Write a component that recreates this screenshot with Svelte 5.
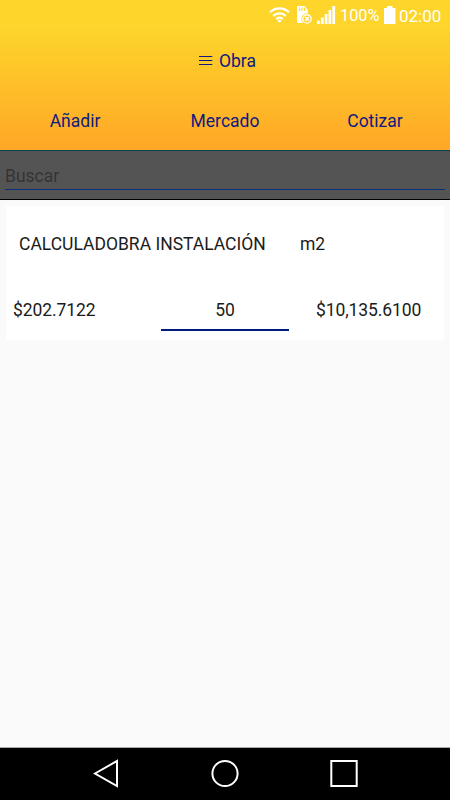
<script lang="ts">
  const tabs = ['Añadir', 'Mercado', 'Cotizar'];
  let search = '';
  let item = {
    name: 'CALCULADOBRA INSTALACIÓN',
    unit: 'm2',
    price: 202.7122,
    quantity: '50',
  };

  function money(value: number): string {
    return '$' + value.toLocaleString('en-US', {minimumFractionDigits: 4, maximumFractionDigits: 4});
  }

  $: total = item.price * Number(item.quantity);
</script>

<div class="screen">
  <header>
    <div class="status">
      <svg class="wifi" width="21" height="17" viewBox="0 0 21 17">
        <g fill="none" stroke="#fff" stroke-width="2.300">
          <path d="M1 6.300C6.400 1 14.600 1 20 6.300" />
          <path d="M4.200 9.900c3.600-3.500 9-3.500 12.600 0" />
          <path d="M7.300 13.100c1.900-1.700 4.500-1.700 6.400 0" />
        </g>
        <circle cx="10.500" cy="15" r="1.600" fill="#fff" />
      </svg>
      <svg class="card-icon" width="16" height="19" viewBox="0 0 16 19">
        <path d="M0 17V2Q0 1 1 1H7.500L10.800 4.500V18H1Q0 18 0 17z" fill="#fff" />
        <path d="M2.500 2.500v3.500M5 2.500v3.500M7.500 2.500v3.500" stroke="#ffd42b" stroke-width="1.100" />
        <circle cx="10" cy="13.900" r="5.600" fill="#ffd32b" />
        <circle cx="10" cy="13.900" r="4.200" fill="none" stroke="#fff" stroke-width="1.400" />
        <path d="M8.200 12.100l3.600 3.600M11.800 12.100l-3.600 3.600" stroke="#fff" stroke-width="1.600" />
      </svg>
      <svg class="signal" width="19" height="18" viewBox="0 0 19 18">
        <path d="M0 14.500h2.800v3.500H0zM3.900 11.500h2.800v6.500H3.900zM7.700 8h2.800v10H7.700zM11.500 4h2.800v14h-2.800zM15.300 0h2.800v18h-2.800z" fill="#fff" />
      </svg>
      <span class="percent">100%</span>
      <svg class="battery" width="12" height="18" viewBox="0 0 12 18">
        <path d="M3 0h5.500v2h3v16H0V2h3z" fill="#fff" />
      </svg>
      <span class="clock">02:00</span>
    </div>
    <div class="title">
      <svg width="14" height="10" viewBox="0 0 14 10">
        <path d="M0 .5h13.300M0 4.500h13.300M0 8.500h13.300" stroke="#101a80" stroke-width="1" />
      </svg>
      <span>Obra</span>
    </div>
    <nav>
      {#each tabs as tab}
        <button>{tab}</button>
      {/each}
    </nav>
  </header>

  <div class="search">
    <input type="text" bind:value={search} placeholder="Buscar">
  </div>

  <main>
    <div class="item">
      <div class="row top">
        <span class="name">{item.name}</span>
        <span class="unit">{item.unit}</span>
      </div>
      <div class="row bottom">
        <span class="price">{money(item.price)}</span>
        <input type="text" bind:value={item.quantity}>
        <span class="total">{money(total)}</span>
      </div>
    </div>
  </main>

  <footer>
    <svg width="28" height="30" viewBox="0 0 28 30">
      <path d="M3 15.500L25 3v25z" />
    </svg>
    <svg width="28" height="30" viewBox="0 0 28 30">
      <circle cx="14" cy="15.500" r="12.600" />
    </svg>
    <svg width="28" height="30" viewBox="0 0 28 30">
      <path d="M1.300 3h25.400v25H1.300z" />
    </svg>
  </footer>
</div>

<style>
  * {
    box-sizing: border-box;
    margin: 0;
    padding: 0;
  }

  .screen {
    display: flex;
    flex-direction: column;
    width: 450px;
    height: 800px;
    font-family: Roboto, sans-serif;
    font-size: 17.5px;
    color: #1b1b1b;
    background: #fafafa;
    overflow: hidden;
  }

  header {
    height: 150px;
    background: linear-gradient(#fdd52b 0, #fdd52b 28px, #ffa726 150px);
    color: #101a80;
  }

  .status {
    display: flex;
    justify-content: flex-end;
    height: 30px;
    padding-right: 8px;
    color: #fff;
    line-height: 32px;
  }

  .status svg {
    flex: none;
  }

  .wifi {
    margin: 6px 7px 0 0;
  }

  .card-icon {
    margin: 5px 4px 0 0;
  }

  .signal {
    margin: 6px 4px 0 0;
  }

  .percent {
    width: 39px;
    margin-right: 5px;
    font-size: 16.3px;
    white-space: nowrap;
  }

  .battery {
    margin: 6px 3px 0 0;
  }

  .clock {
    width: 43px;
    font-size: 17px;
    white-space: nowrap;
  }

  .title {
    display: flex;
    align-items: center;
    justify-content: center;
    gap: 6px;
    height: 61px;
    padding-left: 5px;
  }

  nav {
    display: grid;
    grid-template-columns: repeat(3, 1fr);
    height: 59px;
  }

  button {
    border: 0;
    background: none;
    color: inherit;
    font: inherit;
  }

  input {
    border: 0;
    outline: 0;
    border-radius: 0;
    background: none;
    color: inherit;
    font: inherit;
  }

  .search {
    height: 50px;
    padding: 0 5px;
    border-top: 1px solid #004050;
    border-bottom: 1px solid #000;
    background: #545454;
  }

  .search input {
    display: block;
    width: 100%;
    height: 39px;
    padding-top: 11px;
    border-bottom: 1px solid #062f7c;
  }

  .search input::placeholder {
    color: #343434;
    opacity: 1;
  }

  main {
    flex: 1;
    padding: 6px;
  }

  .item {
    height: 134px;
    background: #fff;
  }

  .row {
    display: flex;
    align-items: center;
    white-space: nowrap;
  }

  .top {
    height: 76px;
    padding-left: 13px;
  }

  .name {
    width: 281px;
  }

  .bottom {
    height: 49px;
    padding-left: 7px;
  }

  .price {
    width: 148px;
    padding-top: 7px;
    letter-spacing: -0.1px;
  }

  .bottom input {
    align-self: flex-end;
    width: 128px;
    height: 37px;
    padding-bottom: 3px;
    border-bottom: 2px solid #001a80;
    text-align: center;
  }

  .total {
    margin-left: 27px;
    padding-top: 7px;
    letter-spacing: -0.1px;
  }

  footer {
    display: flex;
    justify-content: center;
    gap: 91px;
    height: 53px;
    padding-top: 10px;
    border-top: 1px solid #aaa;
    background: #000;
  }

  footer path,
  footer circle {
    fill: none;
    stroke: #fff;
    stroke-width: 2;
  }
</style>
